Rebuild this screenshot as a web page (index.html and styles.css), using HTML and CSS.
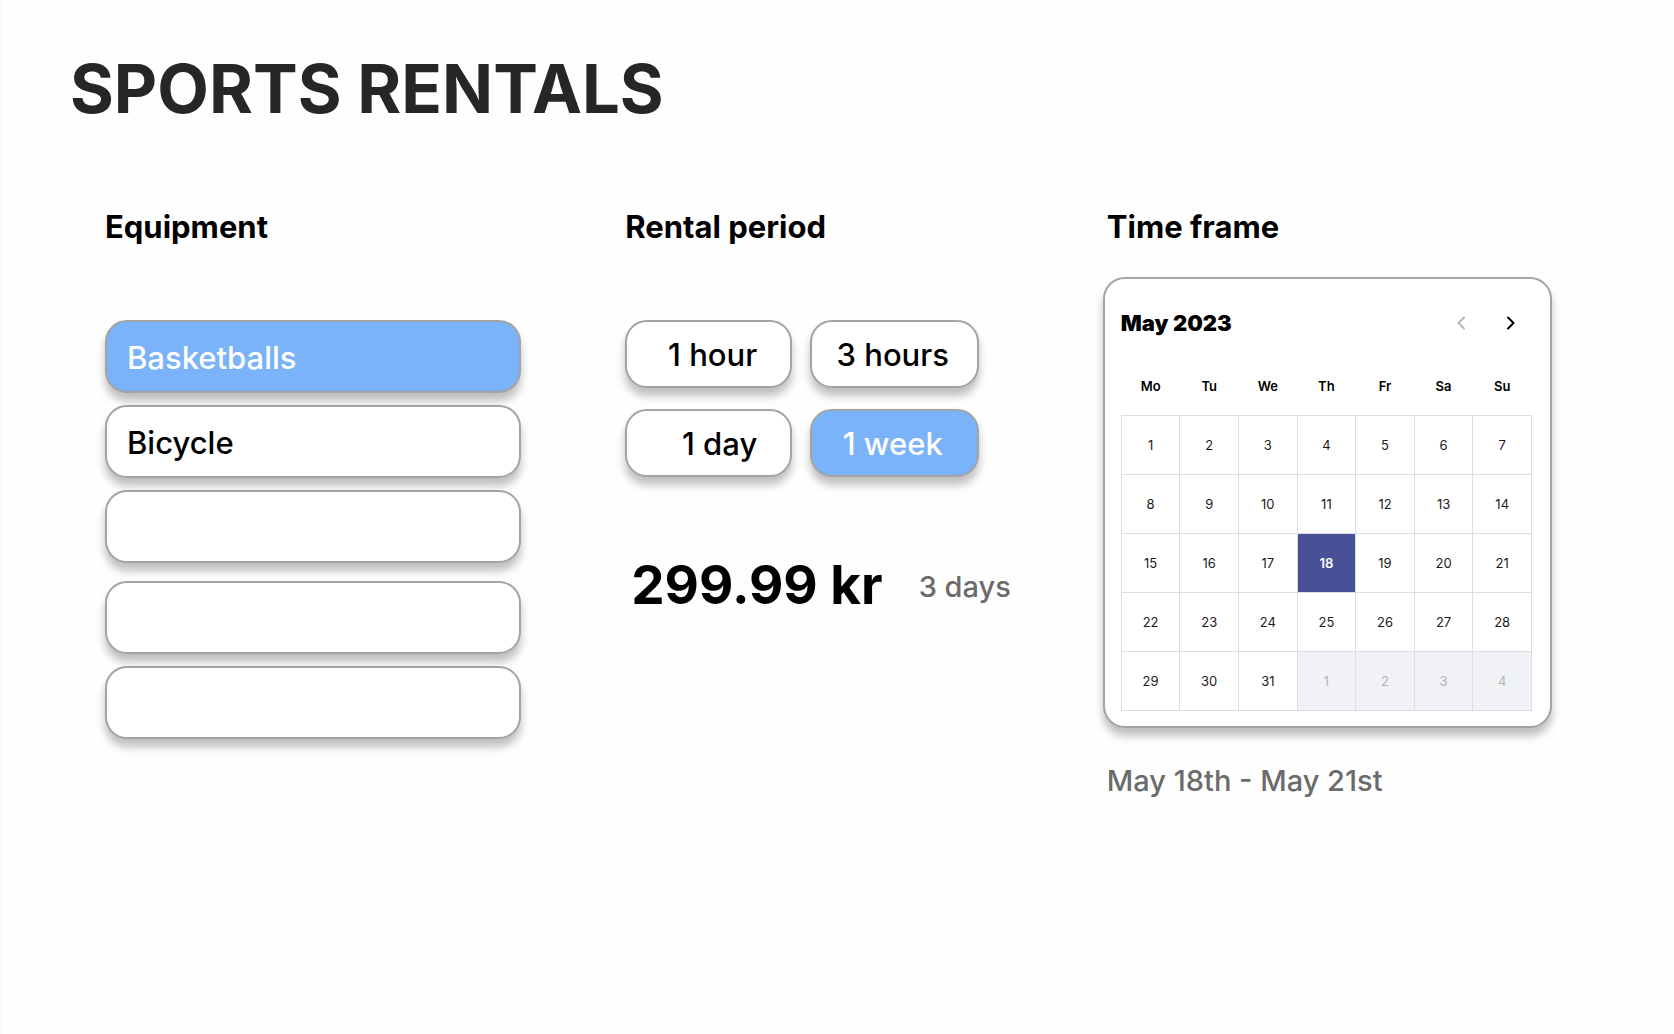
FILE: index.html
```html
<!DOCTYPE html>
<html lang="en">
<head>
<meta charset="utf-8">
<meta name="viewport" content="width=device-width, initial-scale=1">
<title>Sports Rentals</title>
<link rel="stylesheet" href="styles.css">
</head>
<body>
<main class="page">
  <h1 class="page-title">SPORTS RENTALS</h1>
  <div class="columns">
    <section class="equipment">
      <h2 class="heading">Equipment</h2>
      <div class="equipment-list">
        <div class="equipment-group">
          <button type="button" class="option selected" aria-pressed="true">Basketballs</button>
          <button type="button" class="option">Bicycle</button>
          <button type="button" class="option" aria-label="Empty slot"></button>
        </div>
        <div class="equipment-group">
          <button type="button" class="option" aria-label="Empty slot"></button>
          <button type="button" class="option" aria-label="Empty slot"></button>
        </div>
      </div>
    </section>

    <section class="period">
      <h2 class="heading">Rental period</h2>
      <div class="period-grid">
        <button type="button" class="option period-option align-end">1 hour</button>
        <button type="button" class="option period-option">3 hours</button>
        <button type="button" class="option period-option align-end">1 day</button>
        <button type="button" class="option period-option selected" aria-pressed="true">1 week</button>
      </div>
      <p class="price-row"><strong class="price">299.99 kr</strong><span class="note duration">3 days</span></p>
    </section>

    <section class="timeframe">
      <h2 class="heading inset">Time frame</h2>
      <div class="calendar">
        <div class="calendar-bar">
          <h3 class="month">May 2023</h3>
          <div class="month-nav">
            <button type="button" class="nav-button" aria-label="Previous month" disabled>
              <svg width="10" height="14" viewBox="0 0 10 14" fill="none" stroke="currentColor" stroke-width="2" stroke-linecap="round" stroke-linejoin="round"><path d="M8 1.5 2.5 7 8 12.5"/></svg>
            </button>
            <button type="button" class="nav-button" aria-label="Next month">
              <svg width="10" height="14" viewBox="0 0 10 14" fill="none" stroke="currentColor" stroke-width="2" stroke-linecap="round" stroke-linejoin="round"><path d="M2 1.5 7.5 7 2 12.5"/></svg>
            </button>
          </div>
        </div>
        <table class="dates">
          <thead>
            <tr><th>Mo</th><th>Tu</th><th>We</th><th>Th</th><th>Fr</th><th>Sa</th><th>Su</th></tr>
          </thead>
          <tbody>
            <tr><td>1</td><td>2</td><td>3</td><td>4</td><td>5</td><td>6</td><td>7</td></tr>
            <tr><td>8</td><td>9</td><td>10</td><td>11</td><td>12</td><td>13</td><td>14</td></tr>
            <tr><td>15</td><td>16</td><td>17</td><td class="picked">18</td><td>19</td><td>20</td><td>21</td></tr>
            <tr><td>22</td><td>23</td><td>24</td><td>25</td><td>26</td><td>27</td><td>28</td></tr>
            <tr><td>29</td><td>30</td><td>31</td><td class="outside">1</td><td class="outside">2</td><td class="outside">3</td><td class="outside">4</td></tr>
          </tbody>
        </table>
      </div>
      <p class="note range">May 18th - May 21st</p>
    </section>
  </div>
</main>
</body>
</html>
```
FILE: styles.css
```css
* {
  box-sizing: border-box;
}

body {
  margin: 0;
  background: #fefefe;
  color: #000;
  font-family: Inter, "Liberation Sans", sans-serif;
}

h1, h2, h3, p {
  margin: 0;
}

button {
  margin: 0;
  font-family: inherit;
  color: inherit;
}

.page {
  min-height: 100vh;
  padding: 49px 122px 48px 69px;
  border-left: 1px solid #f8f8f8;
}

.page-title {
  color: #262626;
  font-size: 67px;
  line-height: 80px;
  font-weight: 700;
}

.columns {
  display: grid;
  grid-template-columns: 417fr 384fr 450fr;
  column-gap: 92px;
  margin-top: 78px;
  padding-left: 35px;
}

.heading {
  font-size: 31px;
  line-height: 40px;
  font-weight: 700;
  white-space: nowrap;
}

.inset {
  padding-left: 4px;
}

.option {
  width: 100%;
  height: 73px;
  padding: 2px 20px 0;
  border: 2px solid #a3a3a3;
  border-radius: 22px;
  background: #fff;
  box-shadow: 0 8px 8px rgba(0, 0, 0, 0.25);
  font-size: 31px;
  font-weight: 500;
  text-align: left;
  white-space: nowrap;
}

.selected {
  background: #7ab3f9;
  color: #fff;
}

.equipment-list {
  display: flex;
  flex-direction: column;
  gap: 18px;
  margin-top: 73px;
}

.equipment-group {
  display: flex;
  flex-direction: column;
  gap: 12px;
}

.period {
  padding-left: 12px;
}

.period-grid {
  display: grid;
  grid-template-columns: 167px 169px;
  gap: 21px 18px;
  margin-top: 73px;
}

.period-option {
  height: 68px;
  padding: 0 24px 0 20px;
  text-align: center;
}

.align-end {
  padding-right: 33px;
  text-align: right;
}

.price-row {
  display: flex;
  align-items: center;
  gap: 36px;
  margin-top: 76px;
  padding-left: 6px;
  white-space: nowrap;
}

.price {
  font-size: 53px;
  line-height: 64px;
  font-weight: 700;
}

.note {
  color: #6b6b6b;
  font-size: 29px;
  line-height: 36px;
  font-weight: 500;
}

.duration {
  padding-top: 4px;
}

.calendar {
  margin-top: 30px;
  padding: 26px 18px 15px 16px;
  border: 2px solid #a3a3a3;
  border-radius: 22px;
  background: #fff;
  box-shadow: 0 8px 8px rgba(0, 0, 0, 0.25);
}

.calendar-bar {
  display: flex;
  align-items: center;
  justify-content: space-between;
  padding-right: 9px;
}

.month {
  font-size: 22px;
  line-height: 36px;
  font-weight: 900;
}

.month-nav {
  display: flex;
  gap: 26px;
}

.nav-button {
  display: flex;
  align-items: center;
  justify-content: center;
  width: 24px;
  height: 24px;
  padding: 0;
  border: 0;
  background: none;
}

.nav-button:disabled {
  color: #b5b5b5;
}

.dates {
  width: 100%;
  margin-top: 16px;
  border-collapse: collapse;
  table-layout: fixed;
  font-size: 13px;
  line-height: 16px;
  text-align: center;
}

.dates th {
  height: 58px;
  padding: 0;
  font-weight: 600;
}

.dates td {
  height: 59px;
  padding: 0;
  border: 1px solid #dddde5;
  color: #1a1a1a;
}

.dates .picked {
  background: #485197;
  color: #fff;
  font-weight: 600;
}

.dates .outside {
  background: #f1f2f6;
  color: #b3b3b3;
}

.range {
  margin-top: 35px;
  padding-left: 4px;
}
```
